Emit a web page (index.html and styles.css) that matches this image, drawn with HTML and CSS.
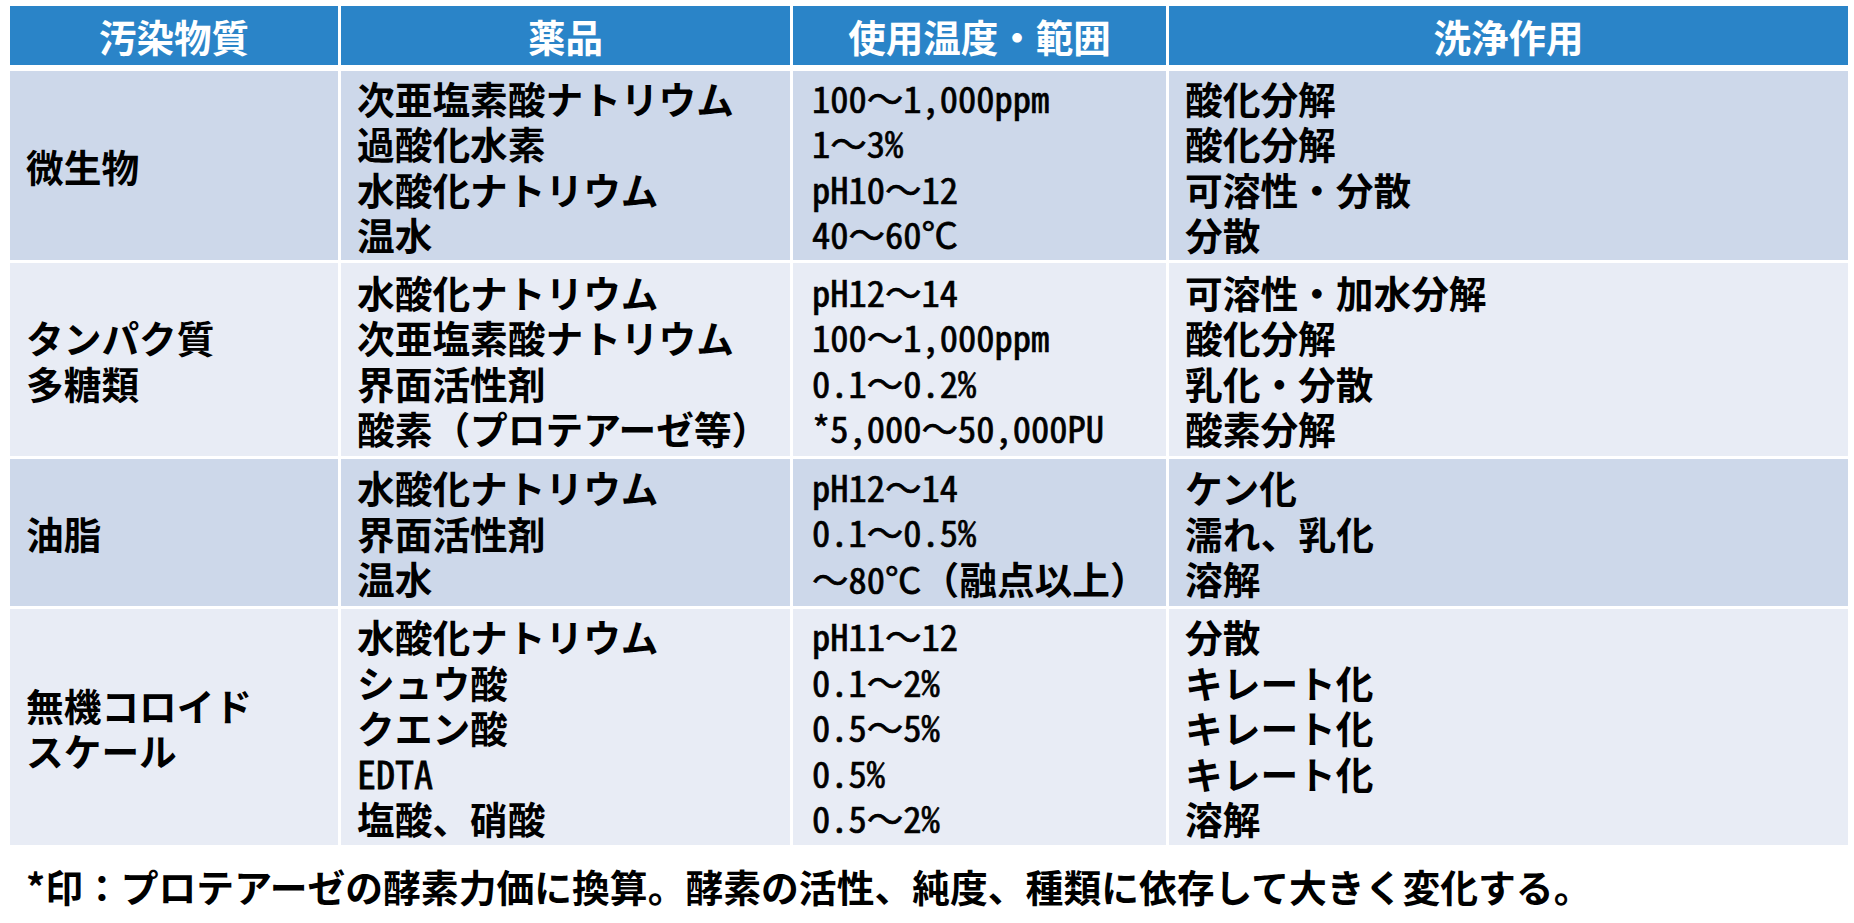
FILE: index.html
```html
<!DOCTYPE html>
<html lang="ja">
<head>
<meta charset="utf-8">
<title>洗浄剤一覧</title>
<link rel="stylesheet" href="styles.css">
</head>
<body>
<div class="table">
  <div class="th">汚染物質</div>
  <div class="th">薬品</div>
  <div class="th">使用温度・範囲</div>
  <div class="th">洗浄作用</div>

  <div class="td dark"><div class="txt">微生物</div></div>
  <div class="td dark"><div class="txt">次亜塩素酸ナトリウム<br>過酸化水素<br>水酸化ナトリウム<br>温水</div></div>
  <div class="td dark num"><div class="txt">100～1,000ppm<br>1～3%<br>pH10～12<br>40～60℃</div></div>
  <div class="td dark"><div class="txt">酸化分解<br>酸化分解<br>可溶性・分散<br>分散</div></div>

  <div class="td light"><div class="txt">タンパク質<br>多糖類</div></div>
  <div class="td light"><div class="txt">水酸化ナトリウム<br>次亜塩素酸ナトリウム<br>界面活性剤<br>酸素（プロテアーゼ等）</div></div>
  <div class="td light num"><div class="txt">pH12～14<br>100～1,000ppm<br>0.1～0.2%<br>*5,000～50,000PU</div></div>
  <div class="td light"><div class="txt">可溶性・加水分解<br>酸化分解<br>乳化・分散<br>酸素分解</div></div>

  <div class="td dark"><div class="txt">油脂</div></div>
  <div class="td dark"><div class="txt">水酸化ナトリウム<br>界面活性剤<br>温水</div></div>
  <div class="td dark num"><div class="txt">pH12～14<br>0.1～0.5%<br>～80℃<span class="kj">（融点以上）</span></div></div>
  <div class="td dark"><div class="txt">ケン化<br>濡れ、乳化<br>溶解</div></div>

  <div class="td light"><div class="txt">無機コロイド<br>スケール</div></div>
  <div class="td light"><div class="txt">水酸化ナトリウム<br>シュウ酸<br>クエン酸<br><span class="num-in">EDTA</span><br>塩酸、硝酸</div></div>
  <div class="td light num"><div class="txt">pH11～12<br>0.1～2%<br>0.5～5%<br>0.5%<br>0.5～2%</div></div>
  <div class="td light"><div class="txt">分散<br>キレート化<br>キレート化<br>キレート化<br>溶解</div></div>
</div>
<p class="note">*印：プロテアーゼの酵素力価に換算。酵素の活性、純度、種類に依存して大きく変化する。</p>
</body>
</html>
```

FILE: styles.css
```css
html, body {
  margin: 0;
  padding: 0;
  background: #ffffff;
}
body {
  padding: 6px 6px 0 10px;
  font-family: "Noto Sans CJK JP", "Noto Sans", sans-serif;
  color: #000;
}
.table {
  display: grid;
  grid-template-columns: 328px 449px 373px 679px;
  grid-template-rows: 62px 189px 193px 147px 236px;
  column-gap: 3px;
  row-gap: 3px;
}
.th {
  background: #2a84c8;
  color: #fff;
  font-weight: 700;
  font-size: 37.5px;
  display: flex;
  align-items: center;
  justify-content: center;
  margin-bottom: 3px;
  line-height: 1;
}
.td {
  display: flex;
  align-items: center;
  padding-left: 16px;
  font-size: 37.7px;
  font-weight: 700;
  line-height: 45.5px;
}
.txt {
  white-space: nowrap;
}
.dark { background: #cdd8ea; }
.light { background: #e8ecf5; }
.num {
  font-family: "Noto Sans Mono CJK JP", "Noto Sans CJK JP", monospace;
  font-weight: 400;
  font-size: 36.5px;
  padding-left: 19px;
  -webkit-text-stroke: 0.7px #000;
}
.num-in {
  font-family: "Noto Sans Mono CJK JP", "Noto Sans CJK JP", monospace;
  font-weight: 400;
  font-size: 38px;
  -webkit-text-stroke: 0.8px #000;
}
.kj {
  font-family: "Noto Sans CJK JP", sans-serif;
  font-weight: 700;
  font-size: 37.7px;
  -webkit-text-stroke: 0;
}
.note {
  margin: 18px 0 0 16px;
  font-size: 37.8px;
  font-weight: 700;
  line-height: 45px;
}
```
